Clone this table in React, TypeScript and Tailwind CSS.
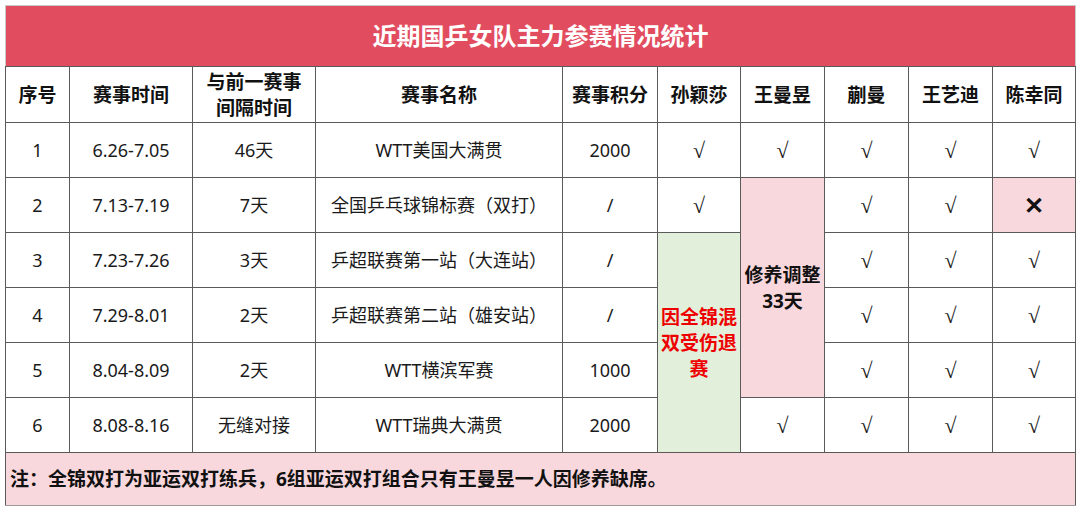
const font = { fontFamily: '"Noto Sans", "Noto Sans CJK SC", sans-serif' };
const tick = { fontFamily: '"Liberation Serif", "DejaVu Serif", serif' };

type Row = {
  no: string;
  time: string;
  gap: string;
  name: string;
  points: string;
  sun?: string;
  wang?: string;
  kuai: string;
  wyd: string;
  chen: string;
};

const rows: Row[] = [
  { no: "1", time: "6.26-7.05", gap: "46天", name: "WTT美国大满贯", points: "2000", sun: "√", wang: "√", kuai: "√", wyd: "√", chen: "√" },
  { no: "2", time: "7.13-7.19", gap: "7天", name: "全国乒乓球锦标赛（双打）", points: "/", sun: "√", kuai: "√", wyd: "√", chen: "×" },
  { no: "3", time: "7.23-7.26", gap: "3天", name: "乒超联赛第一站（大连站）", points: "/", kuai: "√", wyd: "√", chen: "√" },
  { no: "4", time: "7.29-8.01", gap: "2天", name: "乒超联赛第二站（雄安站）", points: "/", kuai: "√", wyd: "√", chen: "√" },
  { no: "5", time: "8.04-8.09", gap: "2天", name: "WTT横滨军赛", points: "1000", kuai: "√", wyd: "√", chen: "√" },
  { no: "6", time: "8.08-8.16", gap: "无缝对接", name: "WTT瑞典大满贯", points: "2000", wang: "√", kuai: "√", wyd: "√", chen: "√" },
];

const headers = ["序号", "赛事时间", "与前一赛事间隔时间", "赛事名称", "赛事积分", "孙颖莎", "王曼昱", "蒯曼", "王艺迪", "陈幸同"];
const widths = [64, 123, 123, 247, 95, 83, 84, 84, 84, 83];

const td = "border border-[#5a5a5a] text-center align-middle text-[18px] text-[#1a1a1a] h-[55px] p-0";
const th = "border border-[#5a5a5a] text-center align-middle text-[19px] font-bold text-[#111] p-0 leading-[26px]";

function Tick({ v }: { v?: string }) {
  return (
    <td className={td + " text-[22px]"} style={tick}>
      {v}
    </td>
  );
}

export default function App() {
  return (
    <div className="w-[1080px] h-[508px] bg-white px-[5px] pt-[5px]" style={font}>
      <table className="table-fixed border-collapse w-[1070px]">
        <colgroup>
          {widths.map((w, i) => (
            <col key={i} style={{ width: w }} />
          ))}
        </colgroup>
        <thead>
          <tr>
            <th colSpan={10} className="h-[61px] bg-[#e24c5f] border border-[#c9c9c9] border-b-[#5a5a5a] text-white text-[24px] font-bold">
              近期国乒女队主力参赛情况统计
            </th>
          </tr>
          <tr className="h-[56px]">
            {headers.map((h, i) => (
              <th key={i} className={th}>
                {i === 2 ? (
                  <>
                    与前一赛事
                    <br />
                    间隔时间
                  </>
                ) : (
                  h
                )}
              </th>
            ))}
          </tr>
        </thead>
        <tbody>
          {rows.map((r, i) => (
            <tr key={r.no}>
              <td className={td}>{r.no}</td>
              <td className={td}>{r.time}</td>
              <td className={td}>{r.gap}</td>
              <td className={td}>{r.name}</td>
              <td className={td}>{r.points}</td>
              {i < 2 && <Tick v={r.sun} />}
              {i === 2 && (
                <td rowSpan={4} className="border border-[#5a5a5a] bg-[#e2efda] text-center align-middle text-[19px] font-bold leading-[26px] text-[#ee0000] px-[2px]">
                  因全锦混双受伤退赛
                </td>
              )}
              {(i === 0 || i === 5) && <Tick v={r.wang} />}
              {i === 1 && (
                <td rowSpan={4} className="border border-[#5a5a5a] bg-[#f9d8dd] text-center align-middle text-[19px] font-bold leading-[26px] text-[#111]">
                  修养调整
                  <br />
                  33天
                </td>
              )}
              <Tick v={r.kuai} />
              <Tick v={r.wyd} />
              {r.chen === "×" ? (
                <td className={td + " bg-[#f9d8dd] text-[24px] font-bold text-[#111]"}>✕</td>
              ) : (
                <Tick v={r.chen} />
              )}
            </tr>
          ))}
          <tr>
            <td colSpan={10} className="border border-[#5a5a5a] border-b-[#9a9a9a] bg-[#f9d8dd] h-[53px] pl-[4px] text-left text-[19px] font-bold text-[#111]">
              注：全锦双打为亚运双打练兵，6组亚运双打组合只有王曼昱一人因修养缺席。
            </td>
          </tr>
        </tbody>
      </table>
    </div>
  );
}
